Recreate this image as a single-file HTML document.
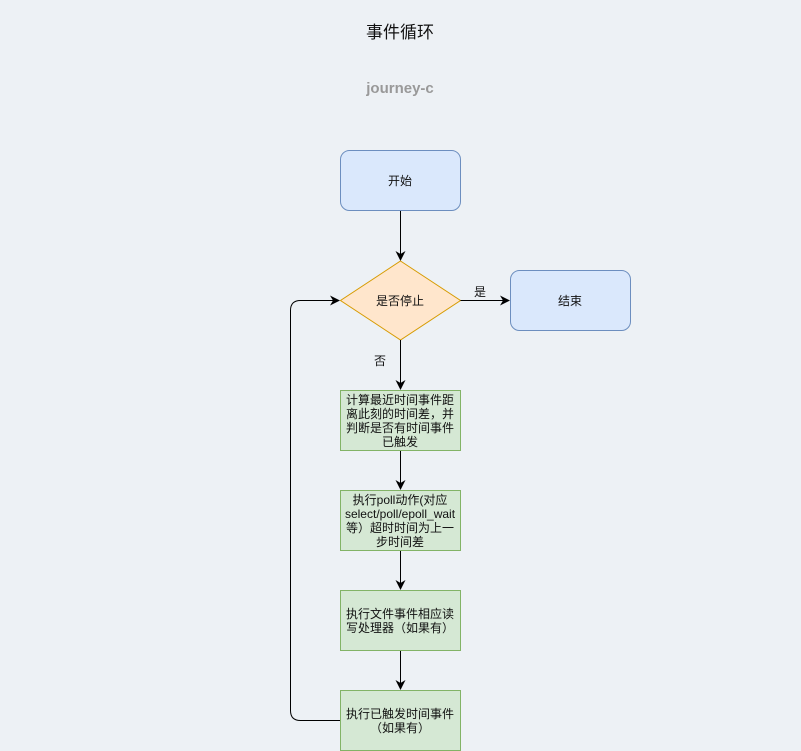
<!DOCTYPE html>
<html><head><meta charset="utf-8"><style>
html,body{margin:0;padding:0;background:#eef2f5;}
svg{display:block}
text{font-family:"Liberation Sans","Noto Sans CJK SC",sans-serif;fill:#111;}
</style></head><body>
<svg width="801" height="751" viewBox="0 0 801 751" xmlns="http://www.w3.org/2000/svg">
<rect width="801" height="751" fill="#edf1f5"/>
<defs><marker id="a" markerWidth="10" markerHeight="10" refX="9" refY="5" orient="auto" markerUnits="userSpaceOnUse"><path d="M0,0 L10,5 L0,10 L3,5 Z" fill="#000"/></marker></defs>
<text x="400" y="38" text-anchor="middle" font-size="17">事件循环</text>
<text x="400" y="93" text-anchor="middle" font-size="15" font-weight="bold" style="fill:#999">journey-c</text>
<rect x="340.5" y="150.5" width="120" height="60" rx="9" fill="#dae8fc" stroke="#6c8ebf"/>
<text x="400" y="185" text-anchor="middle" font-size="12">开始</text>
<line x1="400.5" y1="211" x2="400.5" y2="260" stroke="#000" marker-end="url(#a)"/>
<polygon points="400.5,261 460.5,300.5 400.5,340 340.5,300.5" fill="#ffe6cc" stroke="#d79b00"/>
<text x="400" y="305" text-anchor="middle" font-size="12">是否停止</text>
<line x1="460.5" y1="300.5" x2="509" y2="300.5" stroke="#000" marker-end="url(#a)"/>
<text x="480" y="296" text-anchor="middle" font-size="12">是</text>
<rect x="510.5" y="270.5" width="120" height="60" rx="9" fill="#dae8fc" stroke="#6c8ebf"/>
<text x="570" y="305" text-anchor="middle" font-size="12">结束</text>
<line x1="400.5" y1="340" x2="400.5" y2="389" stroke="#000" marker-end="url(#a)"/>
<text x="380" y="365" text-anchor="middle" font-size="12">否</text>
<g fill="#d5e8d4" stroke="#82b366">
<rect x="340.5" y="390.5" width="120" height="60"/>
<rect x="340.5" y="490.5" width="120" height="60"/>
<rect x="340.5" y="590.5" width="120" height="60"/>
<rect x="340.5" y="690.5" width="120" height="60"/>
</g>
<g font-size="12" text-anchor="middle">
<text x="400" y="404">计算最近时间事件距</text>
<text x="400" y="418">离此刻的时间差，并</text>
<text x="400" y="432">判断是否有时间事件</text>
<text x="400" y="446">已触发</text>
<text x="400" y="504">执行poll动作(对应</text>
<text x="400" y="518">select/poll/epoll_wait</text>
<text x="400" y="532">等）超时时间为上一</text>
<text x="400" y="546">步时间差</text>
<text x="400" y="618">执行文件事件相应读</text>
<text x="400" y="632">写处理器（如果有）</text>
<text x="400" y="718">执行已触发时间事件</text>
<text x="400" y="732">（如果有）</text>
</g>
<g stroke="#000" fill="none">
<line x1="400.5" y1="451" x2="400.5" y2="489" marker-end="url(#a)"/>
<line x1="400.5" y1="551" x2="400.5" y2="589" marker-end="url(#a)"/>
<line x1="400.5" y1="651" x2="400.5" y2="689" marker-end="url(#a)"/>
<path d="M340,720.5 H300.5 Q290.5,720.5 290.5,710.5 V310.5 Q290.5,300.5 300.5,300.5 H339" marker-end="url(#a)"/>
</g>
</svg>
</body></html>
